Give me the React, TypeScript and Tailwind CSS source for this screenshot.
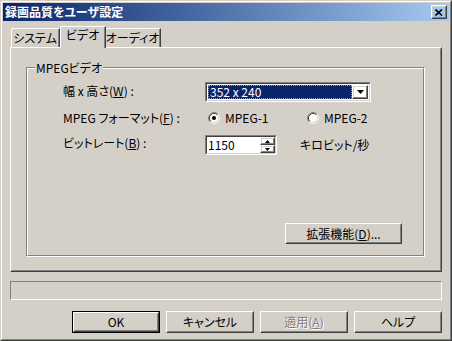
import React from "react";

type P = { className?: string; inner?: string; children?: React.ReactNode };

function Raised({ className = "", inner = "", children }: P) {
  return (
    <div className={`border border-t-white border-l-white border-r-[#404040] border-b-[#404040] ${className}`}>
      <div className={`h-full w-full border border-t-[#d4d0c8] border-l-[#d4d0c8] border-r-[#808080] border-b-[#808080] ${inner}`}>
        {children}
      </div>
    </div>
  );
}

function Sunken({ className = "", inner = "", children }: P) {
  return (
    <div className={`border border-t-[#808080] border-l-[#808080] border-r-white border-b-white ${className}`}>
      <div className={`h-full w-full border border-t-[#404040] border-l-[#404040] border-r-[#d4d0c8] border-b-[#d4d0c8] ${inner}`}>
        {children}
      </div>
    </div>
  );
}

function Radio({ checked }: { checked?: boolean }) {
  return (
    <svg width="12" height="12" viewBox="0 0 12 12" className="shrink-0">
      <circle cx="6" cy="6" r="4.5" fill="#ffffff" />
      <path d="M2.11 9.89 A5.5 5.5 0 0 1 9.89 2.11" stroke="#808080" fill="none" strokeWidth="1" />
      <path d="M9.89 2.11 A5.5 5.5 0 0 1 2.11 9.89" stroke="#ffffff" fill="none" strokeWidth="1" />
      <path d="M2.82 9.18 A4.5 4.5 0 0 1 9.18 2.82" stroke="#404040" fill="none" strokeWidth="1" />
      <path d="M9.18 2.82 A4.5 4.5 0 0 1 2.82 9.18" stroke="#d4d0c8" fill="none" strokeWidth="1" />
      {checked && <circle cx="6" cy="6" r="2" fill="#000000" />}
    </svg>
  );
}

function Btn({ children, w, isDefault }: { children: React.ReactNode; w: string; isDefault?: boolean }) {
  const body = (
    <Raised className={`${isDefault ? "" : w} h-full`} inner="flex items-center justify-center whitespace-nowrap">
      {children}
    </Raised>
  );
  if (isDefault) {
    return <div className={`${w} h-full border border-black`}>{body}</div>;
  }
  return body;
}

export default function App() {
  const font = "font-['Noto_Sans_CJK_JP','Noto_Sans',sans-serif] [font-feature-settings:'palt'] text-[12px] leading-[14px] text-black";
  return (
    <div className={`w-[452px] h-[341px] bg-[#d4d0c8] ${font}`}>
      <div className="h-full w-full border border-t-[#d4d0c8] border-l-[#d4d0c8] border-r-[#404040] border-b-[#404040]">
        <div className="h-full w-full border border-t-white border-l-white border-r-[#808080] border-b-[#808080] p-px flex flex-col">
          {/* Title bar */}
          <div className="h-[18px] shrink-0 bg-linear-to-r from-[#0a246a] to-[#a6caf0] flex items-center pl-[2px] pr-[2px]">
            <span className="text-white font-bold text-[12px] leading-[14px] flex-1 whitespace-nowrap">録画品質をユーザ設定</span>
            <Raised className="w-[16px] h-[14px]" inner="flex items-center justify-center">
              <svg width="8" height="7" viewBox="0 0 8 7">
                <path d="M0.5 0.5 L7 6.5 M7 0.5 L0.5 6.5" stroke="#000" strokeWidth="1.6" />
              </svg>
            </Raised>
          </div>

          <div className="px-[7px] flex flex-col">
            {/* Tabs */}
            <div className="mt-[5px] h-[21px] flex items-end pl-[1px] whitespace-nowrap">
              <div className="w-[49px] h-[19px] border-t border-l border-r border-t-white border-l-white border-r-[#404040] rounded-tl-[2px]">
                <div className="h-full w-full border-r border-r-[#808080] flex items-center justify-center">システム</div>
              </div>
              <div className="relative z-10 top-px w-[46px] h-[22px] bg-[#d4d0c8] border-t border-l border-r border-t-white border-l-white border-r-[#404040] rounded-tl-[2px]">
                <div className="h-full w-full border-r border-r-[#808080] flex items-center justify-center pb-[5px]">ビデオ</div>
              </div>
              <div className="w-[55px] h-[19px] border-t border-r border-t-white border-r-[#404040]">
                <div className="h-full w-full border-r border-r-[#808080] flex items-center justify-center">オーディオ</div>
              </div>
            </div>

            {/* Panel */}
            <Raised className="h-[225px]" inner="flex flex-col">
              <div className="relative mt-[18px] ml-[14px] mr-[15px] h-[190px] border border-t-[#808080] border-l-[#808080] border-r-white border-b-white">
                <span className="absolute left-[8px] top-[-7px] bg-[#d4d0c8] px-[1px] z-10 whitespace-nowrap">MPEGビデオ</span>
                <div className="h-full w-full border border-t-white border-l-white border-r-[#808080] border-b-[#808080] flex flex-col whitespace-nowrap">
                  {/* Row 1 */}
                  <div className="mt-[13px] h-[20px] flex items-center">
                    <div className="w-[177px] pl-[35px] pb-[3px]">
                      幅 x 高さ(<u>W</u>) :
                    </div>
                    <Sunken className="w-[166px] h-[20px]" inner="bg-white flex p-px">
                      <div className="flex-1 bg-[#0a246a] text-white border border-dotted border-[#8a94b8] flex items-center pl-[1px]">
                        352 x 240
                      </div>
                      <Raised className="w-[16px] h-full" inner="flex items-center justify-center">
                        <svg width="7" height="4" viewBox="0 0 7 4">
                          <path d="M0 0 H7 L3.5 4 Z" fill="#000" />
                        </svg>
                      </Raised>
                    </Sunken>
                  </div>

                  {/* Row 2 */}
                  <div className="mt-[8px] h-[16px] flex items-center">
                    <div className="w-[177px] pl-[35px] pb-[1px]">
                      MPEG フォーマット(<u>F</u>) :
                    </div>
                    <div className="ml-[3px] flex items-center gap-[5px] w-[99px]">
                      <Radio checked />
                      <span>MPEG-1</span>
                    </div>
                    <div className="flex items-center gap-[5px]">
                      <Radio />
                      <span>MPEG-2</span>
                    </div>
                  </div>

                  {/* Row 3 */}
                  <div className="mt-[9px] h-[20px] flex items-center">
                    <div className="w-[177px] pl-[35px] pb-[4px]">
                      ビットレート(<u>B</u>) :
                    </div>
                    <Sunken className="w-[72px] h-[20px]" inner="bg-white flex">
                      <div className="flex-1 flex items-center pl-[1px]">1150</div>
                      <div className="w-[15px] flex flex-col">
                        <Raised className="h-[8px]" inner="flex items-center justify-center">
                          <svg width="5" height="3" viewBox="0 0 5 3">
                            <path d="M2.5 0 L5 3 H0 Z" fill="#000" />
                          </svg>
                        </Raised>
                        <Raised className="h-[8px]" inner="flex items-center justify-center">
                          <svg width="5" height="3" viewBox="0 0 5 3">
                            <path d="M0 0 H5 L2.5 3 Z" fill="#000" />
                          </svg>
                        </Raised>
                      </div>
                    </Sunken>
                    <span className="ml-[23px]">キロビット/秒</span>
                  </div>

                  {/* Advanced button */}
                  <div className="mt-[68px] ml-[257px]">
                    <Raised className="w-[117px] h-[21px]" inner="flex items-center justify-center">
                      拡張機能(<u>D</u>)...
                    </Raised>
                  </div>
                </div>
              </div>
            </Raised>

            {/* Status bar */}
            <div className="mt-[9px] h-[19px] border border-t-[#808080] border-l-[#808080] border-r-white border-b-white" />

            {/* Buttons */}
            <div className="mt-[11px] h-[22px] flex justify-end gap-[6px]">
              <Btn w="w-[88px]" isDefault>OK</Btn>
              <Btn w="w-[88px]">キャンセル</Btn>
              <Btn w="w-[88px]">
                <span className="text-[#808080] [text-shadow:1px_1px_0_#ffffff]">
                  適用(<u>A</u>)
                </span>
              </Btn>
              <Btn w="w-[88px]">ヘルプ</Btn>
            </div>
          </div>
        </div>
      </div>
    </div>
  );
}
